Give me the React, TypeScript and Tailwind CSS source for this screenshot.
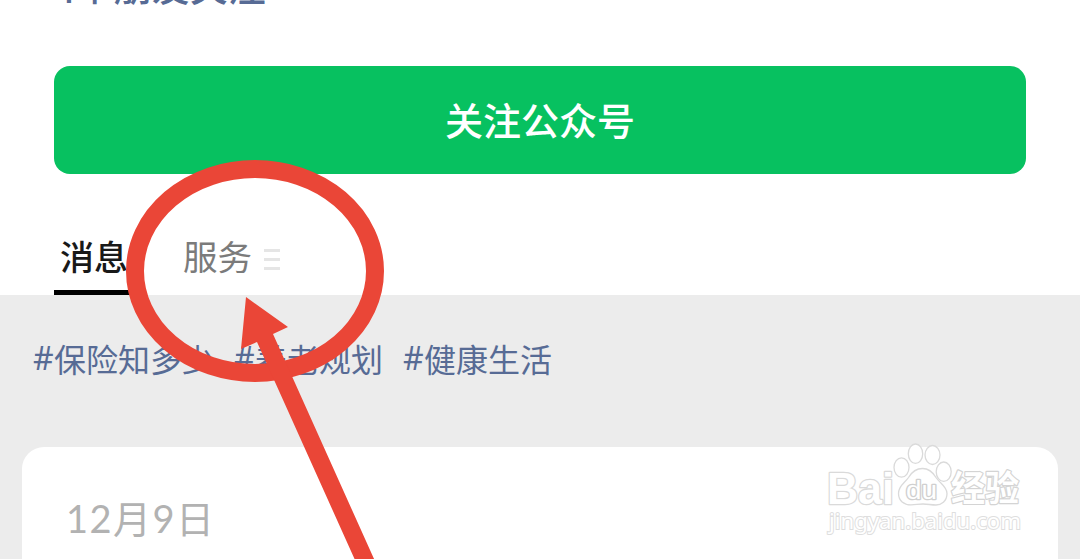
const tags = ['保险知多少', '养老规划', '健康生活'];

function Watermark() {
  return (
    <svg
      className="absolute left-[820px] top-[436px]"
      width="220"
      height="110"
      viewBox="820 436 220 110"
      fill="#fff"
      stroke="#dadada"
      strokeWidth="1.3"
    >
      <g fontFamily="'Liberation Sans', 'Noto Sans CJK SC', sans-serif" fontWeight="700" strokeLinejoin="round">
        <text
          x="827"
          y="504"
          fontSize="45"
          textLength="67"
          lengthAdjust="spacingAndGlyphs"
          strokeWidth="2.600"
          style={{ paintOrder: 'stroke' }}
        >
          Bai
        </text>
        <ellipse cx="901.500" cy="467.500" rx="7.5" ry="9.700" />
        <ellipse cx="915.500" cy="453.700" rx="7.200" ry="9.700" />
        <ellipse cx="932.500" cy="455" rx="7.5" ry="9.5" />
        <ellipse cx="943.700" cy="471.700" rx="7.500" ry="9.700" />
        <path d="M922.500 468.500c7 0 10.500 4 13.500 9 4 6 11 9 11 16 0 8-6 11.500-11 11.500-5 0-8-1-13-1s-7 .800-12 .800c-7 0-12.500-4-12.500-11.300 0-8 6-10 10-16 3-5 7-9 14-9z" />
        <text
          x="906"
          y="499"
          fontSize="25"
          fontWeight="400"
          textLength="31"
          lengthAdjust="spacingAndGlyphs"
          stroke="#d0d0d0"
          strokeWidth="2.600"
          style={{ paintOrder: 'stroke' }}
        >
          du
        </text>
        <text
          x="951"
          y="501"
          fontSize="35"
          textLength="68"
          lengthAdjust="spacingAndGlyphs"
          stroke="#d4d4d4"
          strokeWidth="2.400"
          style={{ paintOrder: 'stroke' }}
        >
          经验
        </text>
      </g>
      <text
        x="829"
        y="529"
        fontFamily="'Noto Sans', sans-serif"
        fontSize="22.500"
        textLength="192"
        lengthAdjust="spacingAndGlyphs"
        stroke="#dedede"
        strokeWidth="2"
        style={{ paintOrder: 'stroke' }}
      >
        jingyan.baidu.com
      </text>
    </svg>
  );
}

function Annotation() {
  return (
    <svg className="absolute left-0 top-0" width="1080" height="559" viewBox="0 0 1080 559">
      <ellipse cx="255" cy="271" rx="120" ry="102" fill="none" stroke="#ea4637" strokeWidth="18" />
      <path d="M246 297L288 327L273 334L374.500 560H355L257 342L241 349Z" fill="#ea4637" />
    </svg>
  );
}

export default function App() {
  return (
    <div className="relative flex h-[559px] w-[1080px] flex-col overflow-hidden bg-[#ececec] font-['Noto_Sans_CJK_SC',sans-serif]">
      <header className="flex h-[295px] flex-col bg-white px-[54px]">
        <div className="flex h-[66px] items-start">
          <p className="-mt-[34px] whitespace-nowrap text-[38px] font-medium leading-[38px] text-[#576b95]">
            <span className="relative top-[2px]">4</span>个朋友关注
          </p>
        </div>
        <button className="flex h-[108px] shrink-0 items-center justify-center rounded-[16px] bg-[#07c160] pb-[3px] text-[38px] font-medium leading-none text-white">
          关注公众号
        </button>
        <nav className="flex flex-1 items-stretch">
          <div className="flex w-[80px] flex-col items-center justify-end border-b-[5px] border-black pb-[17px] text-[34px] font-medium leading-[34px] text-[#191919]">
            消息
          </div>
          <div className="ml-[49px] flex items-end gap-3 pb-[23px] text-[34.500px] leading-[34px] text-[#7b7b7b]">
            服务
            <span className="mb-[2px] flex w-4 flex-col gap-[6px]">
              <i className="h-[3px] bg-[#e5e5e5]" />
              <i className="h-[3px] bg-[#e5e5e5]" />
              <i className="h-[3px] bg-[#e5e5e5]" />
            </span>
          </div>
        </nav>
      </header>
      <div className="flex h-[152px] shrink-0 gap-5 pl-[33px] pt-[47px] text-[32px] leading-[32px] text-[#576b95]">
        {tags.map((tag) => (
          <span key={tag} className="flex whitespace-nowrap">
            <span className="w-[21px] font-['Noto_Sans']">#</span>
            {tag}
          </span>
        ))}
      </div>
      <main className="mx-[22px] flex-1 rounded-t-[22px] bg-white pl-11 pt-[52px]">
        <time className="block font-['Lato','Noto_Sans_CJK_SC',sans-serif] text-[38px] leading-[38px] tracking-[1.5px] text-[#b2b2b2]">
          12月9日
        </time>
      </main>
      <Watermark />
      <Annotation />
    </div>
  );
}
